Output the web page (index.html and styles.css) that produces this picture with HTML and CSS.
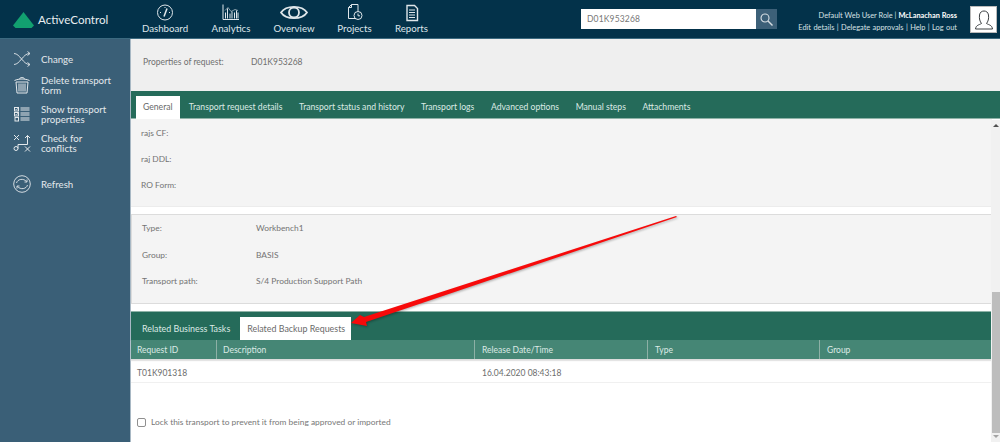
FILE: index.html
```html
<!DOCTYPE html>
<html lang="en">
<head>
<meta charset="utf-8">
<title>ActiveControl</title>
<link rel="stylesheet" href="styles.css">
</head>
<body>
<header class="topbar">
  <div class="brand">
    <svg class="brand-mark" width="21" height="16" viewBox="0 0 21 16"><path d="M10.500 0 L21 13.500 L18.500 16 L2.500 16 L0 13.500 Z" fill="#12a070"/></svg>
    <span class="brand-name">ActiveControl</span>
  </div>
  <nav class="mainnav">
    <a class="navitem nav-dash"><svg width="18" height="18" viewBox="0 0 18 18" fill="none" stroke="#dfe6ea" stroke-width="1"><circle cx="9" cy="9" r="7.500"/><path d="M11 5 L8 13" stroke-width="1.600"/><path d="M4 9h1M9 3.500v1M13 9h1"/></svg><span>Dashboard</span></a>
    <a class="navitem nav-ana"><svg width="18" height="18" viewBox="0 0 18 18" fill="none" stroke="#dfe6ea" stroke-width="1"><path d="M1 1v15h16"/><path d="M3.500 15V9M5.500 15V5M8 15V10M10 15V8M12.500 15V9M14.500 15V7M16 15V9"/><path d="M3 7l3-3 3 4 4-2 3 1" stroke-width=".6"/></svg><span>Analytics</span></a>
    <a class="navitem nav-over"><svg width="28" height="18" viewBox="0 0 28 18" fill="none" stroke="#dfe6ea"><path d="M1 9 C6 1.500 22 1.500 27 9 C22 16.500 6 16.500 1 9 Z" stroke-width="1.800"/><circle cx="14" cy="9" r="5" stroke-width="1.800"/></svg><span>Overview</span></a>
    <a class="navitem nav-proj"><svg width="16" height="18" viewBox="0 0 16 18" fill="none" stroke="#dfe6ea" stroke-width="1"><path d="M9 15H1.500V4L4.500 1H11V8"/><path d="M1.500 4H4.500V1"/><circle cx="11" cy="12" r="4"/><path d="M11 10v2.300h2"/></svg><span>Projects</span></a>
    <a class="navitem nav-rep"><svg width="14" height="18" viewBox="0 0 14 18" fill="none" stroke="#dfe6ea" stroke-width="1"><path d="M2 2.500V17H12.500V5L9.500 2H2Z" stroke-width="1.400"/><path d="M4 6.500h6M4 9h6M4 11.500h6M4 14h6"/></svg><span>Reports</span></a>
  </nav>
  <div class="search">
    <div class="search-input">D01K953268</div>
    <div class="search-btn"><svg width="13" height="13" viewBox="0 0 13 13" fill="none" stroke="#d5dde2" stroke-width="1.100"><circle cx="5" cy="5" r="4"/><path d="M8 8l4.500 4.500" stroke-width="1.400"/></svg></div>
  </div>
  <div class="userinfo">
    <div>Default Web User Role | <b>McLanachan Ross</b></div>
    <div class="userlinks">Edit details | Delegate approvals | Help | Log out</div>
  </div>
  <div class="avatar"><svg width="20" height="20" viewBox="0 0 20 20" fill="none" stroke="#3c4043" stroke-width="1"><path d="M1.500 19C2 15 5 15 7.500 13.500C6 11.500 5 9 5.500 5C6 2 8 1 10 1C12 1 14 2 14.500 5C15 9 14 11.500 12.500 13.500C15 15 18 15 18.500 19Z"/></svg></div>
</header>
<div class="shell">
  <aside class="sidebar">
    <a class="sideitem"><svg width="18" height="16" viewBox="0 0 18 16" fill="none" stroke="#e4e9ec" stroke-width=".9"><path d="M1 2.500C7 2.500 10 13.500 16.500 13.500M1 13.500C7 13.500 10 2.500 16.500 2.500"/><path d="M14.500 .5L17 2.500L14.500 4.500M14.500 11.500L17 13.500L14.500 15.500"/></svg><span>Change</span></a>
    <a class="sideitem"><svg width="18" height="18" viewBox="0 0 18 18" fill="none" stroke="#e4e9ec" stroke-width="1"><path d="M1.500 4.500C6 2.500 12 2.500 16.500 4.500"/><path d="M6.500 3C7 1 11 1 11.500 3"/><path d="M3 6H15L14 17H4Z"/><path d="M6 7.500V15.500M8 7.500V15.500M10 7.500V15.500M12 7.500V15.500"/></svg><span>Delete transport form</span></a>
    <a class="sideitem"><svg width="18" height="16" viewBox="0 0 18 16" fill="none" stroke="#e4e9ec" stroke-width="1"><path d="M7.500 2h9M7.500 4h9M7.500 7h9M7.500 9h9M7.500 12h9M7.500 14h9"/><rect x="1.500" y="1.500" width="4" height="3.500"/><path d="M2.500 3l1 1 2-2.500" stroke-width=".8"/><rect x="1.500" y="6.500" width="4" height="3.500"/><path d="M2.500 8l1 1 2-2.500" stroke-width=".8"/><rect x="2" y="11.500" width="3.500" height="3.500"/></svg><span>Show transport properties</span></a>
    <a class="sideitem"><svg width="18" height="18" viewBox="0 0 18 18" fill="none" stroke="#e4e9ec" stroke-width="1"><path d="M1 1l5 5M6 1L1 6M12 12.500l5 5M17 12.500l-5 5"/><circle cx="3" cy="14.500" r="2"/><path d="M5 14.500V10.500H14.500V1.500M12 4l2.500-2.500L17 4"/></svg><span>Check for conflicts</span></a>
    <a class="sideitem refresh"><svg width="18" height="18" viewBox="0 0 18 18" fill="none" stroke="#e4e9ec" stroke-width=".9"><circle cx="9" cy="9" r="8.300"/><path d="M3.500 8C4.500 4 10.500 3 13.500 6.500M14.500 10C13.500 14 7.500 15 4.500 11.500"/><path d="M11.500 7H14V4.500M6.500 11H4V13.500"/></svg><span>Refresh</span></a>
  </aside>
  <main class="content">
    <section class="summary"><span class="summary-label">Properties of request:</span><span>D01K953268</span></section>
    <div class="tabs">
      <a class="tab active">General</a>
      <a class="tab">Transport request details</a>
      <a class="tab">Transport status and history</a>
      <a class="tab">Transport logs</a>
      <a class="tab">Advanced options</a>
      <a class="tab">Manual steps</a>
      <a class="tab">Attachments</a>
    </div>
    <section class="panel panel-top">
      <div class="row"><span class="label">rajs CF:</span></div>
      <div class="row"><span class="label">raj DDL:</span></div>
      <div class="row"><span class="label">RO Form:</span></div>
    </section>
    <section class="panel panel-mid">
      <div class="row"><span class="label wide">Type:</span><span>Workbench1</span></div>
      <div class="row"><span class="label wide">Group:</span><span>BASIS</span></div>
      <div class="row"><span class="label wide">Transport path:</span><span>S/4 Production Support Path</span></div>
    </section>
    <div class="subtabs">
      <a class="subtab">Related Business Tasks</a>
      <a class="subtab active">Related Backup Requests</a>
    </div>
    <div class="grid thead">
      <div>Request ID</div><div>Description</div><div>Release Date/Time</div><div>Type</div><div>Group</div>
    </div>
    <div class="grid tbody">
      <div>T01K901318</div><div></div><div>16.04.2020 08:43:18</div><div></div><div></div>
    </div>
    <label class="lock"><span class="checkbox"></span>Lock this transport to prevent it from being approved or imported</label>
    <div class="scrollbar"><span class="arrow up"></span><span class="thumb"></span><span class="arrow down"></span></div>
    <svg class="annotation" width="560" height="120" viewBox="0 0 560 120"><path d="M546 0 L547 1 L236 106 L237 110 L221 107 L230 99 L234 101 Z" fill="#f70a0a"/></svg>
  </main>
</div>
</body>
</html>
```
FILE: styles.css
```css
* { box-sizing: border-box; }
html, body { margin: 0; padding: 0; height: 442px; overflow: hidden; }
body { font-family: Lato, "Liberation Sans", sans-serif; font-size: 9px; color: #6d6d6d; background: #fff; }
a { color: inherit; text-decoration: none; }
.topbar { height: 39px; background: #03324a; color: #dfe6ea; display: flex; align-items: stretch; border-bottom: 1px solid #3c6a80; }
.brand { width: 130px; display: flex; align-items: center; padding: 1px 0 0 13px; flex: none; }
.brand-mark { flex: none; margin-right: 4px; }
.brand-name { font-size: 11.600px; color: #e8eef0; white-space: nowrap; }
.mainnav { display: flex; width: 451px; flex: none; font-size: 9.700px; }
.navitem { display: flex; flex-direction: column; align-items: center; justify-content: flex-start; padding-top: 3px; gap: 0; white-space: nowrap; }
.navitem svg { height: 19px; flex: none; }
.nav-dash { margin-left: 12px; width: 46px; }
.nav-ana { margin-left: 24px; width: 38px; }
.nav-over { margin-left: 24px; width: 40px; }
.nav-proj { margin-left: 24px; width: 33px; }
.nav-rep { margin-left: 24px; width: 33px; }
.search { display: flex; margin-top: 9px; height: 20px; flex: none; width: 196px; }
.search-input { width: 175px; background: #fff; color: #777; font-size: 8.500px; padding: 5px 6px; letter-spacing: .15px; }
.search-btn { width: 21px; background: #3c6078; display: flex; align-items: center; justify-content: center; }
.userinfo { flex: 1; text-align: right; font-size: 7.400px; line-height: 11px; padding-top: 10px; color: #d9e2e6; white-space: nowrap; }
.userinfo b { color: #fff; }
.userlinks { margin-top: 1px; word-spacing: .5px; }
.avatar { width: 27px; height: 27px; background: #fff; margin: 6px 3px 0 13px; flex: none; display: flex; align-items: center; justify-content: center; border: 1px solid #bbb; }
.shell { display: flex; height: 403px; }
.sidebar { width: 130px; flex: none; background: #3a5f77; color: #e4e9ec; font-size: 9.700px; line-height: 10px; padding-top: 10px; }
.sideitem { display: flex; align-items: center; padding-left: 13px; gap: 10px; height: 29px; }
.sideitem svg { flex: none; }
.sideitem span { width: 76px; }
.sideitem:first-child { height: 20px; margin-bottom: 1px; }
.refresh { margin-top: 12px; }
.content { position: relative; flex: 1; min-width: 0; border-left: 1px solid #a8b8c4; background: #fff; }
.summary { height: 52px; background: #efefef; padding: 18px 12px 0; display: flex; font-size: 8.500px; color: #6f6f6f; }
.summary-label { width: 108px; }
.tabs { height: 28px; background: #256b5a; display: flex; padding: 5px 0 0 5px; color: #dceae5; font-size: 8.650px; border-bottom: 1px solid #8fb3a8; }
.tab { padding: 5px 8.300px 0; white-space: nowrap; }
.tab.active { background: #fff; color: #6a6a6a; padding: 5px 7px 0; margin-right: 1px; height: 23px; }
.panel { background: #f4f4f4; margin-right: 8px; font-size: 8.400px; color: #737373; }
.panel-top { height: 88px; padding-top: 1px; border-bottom: 1px solid #ececec; }
.panel-mid { height: 90px; margin-top: 7px; padding-top: 0; border: 1px solid #dcdcdc; }
.row { height: 26px; display: flex; align-items: center; padding-left: 10px; }
.panel-mid .row { height: 26.500px; }
.label { display: block; }
.label.wide { width: 114px; }
.subtabs { height: 29px; margin-top: 7px; margin-right: 8px; background: #256b5a; display: flex; padding-top: 5px; color: #dceae5; font-size: 8.900px; border-top: 1px solid #8fb3a8; }
.subtab { padding: 6px 9px 0 11px; white-space: nowrap; }
.subtab.active { background: #fff; color: #6a6a6a; padding: 6px 6px 0 7px; margin-left: 1px; width: 111px; }
.grid { display: grid; grid-template-columns: 86px 258px 173px 172px 1fr; margin-right: 8px; font-size: 8.500px; }
.thead { height: 20px; background: #458675; color: #dceae5; align-items: stretch; border-bottom: 1px solid #dcdcdc; box-shadow: 0 1px 1px #e4e4e4; }
.thead > div { padding: 5px 6px 0 7px; border-right: 1px solid #8db0a6; }
.thead > div:first-child { padding-left: 6px; }
.thead > div:nth-child(2) { padding-left: 6px; }
.thead > div:last-child { border-right: none; }
.tbody { height: 23px; align-items: center; padding-top: 3px; border-bottom: 1px solid #f0f0f0; color: #6d6d6d; }
.tbody > div { padding: 0 6px; }
.tbody > div:nth-child(3) { padding-left: 7px; }
.lock { display: flex; align-items: center; margin: 34px 0 0 6px; font-size: 8.400px; color: #777; }
.checkbox { width: 9px; height: 9px; border: 1px solid #8f8f8f; border-radius: 2px; margin-right: 5px; background: #fff; }
.scrollbar { position: absolute; top: 81px; right: 0; width: 9px; bottom: 0; background: #f1f1f1; }
.thumb { position: absolute; top: 172px; left: 1px; right: 0; height: 141px; background: #bdbdbd; }
.arrow { position: absolute; left: 2px; width: 0; height: 0; border-left: 3px solid transparent; border-right: 3px solid transparent; }
.arrow.up { top: 4px; border-bottom: 3px solid #505050; }
.arrow.down { bottom: 4px; border-top: 3px solid #a3a3a3; }
.annotation { position: absolute; left: -1px; top: 177px; filter: drop-shadow(1px 1px 1px rgba(0,0,0,.3)); }
```
